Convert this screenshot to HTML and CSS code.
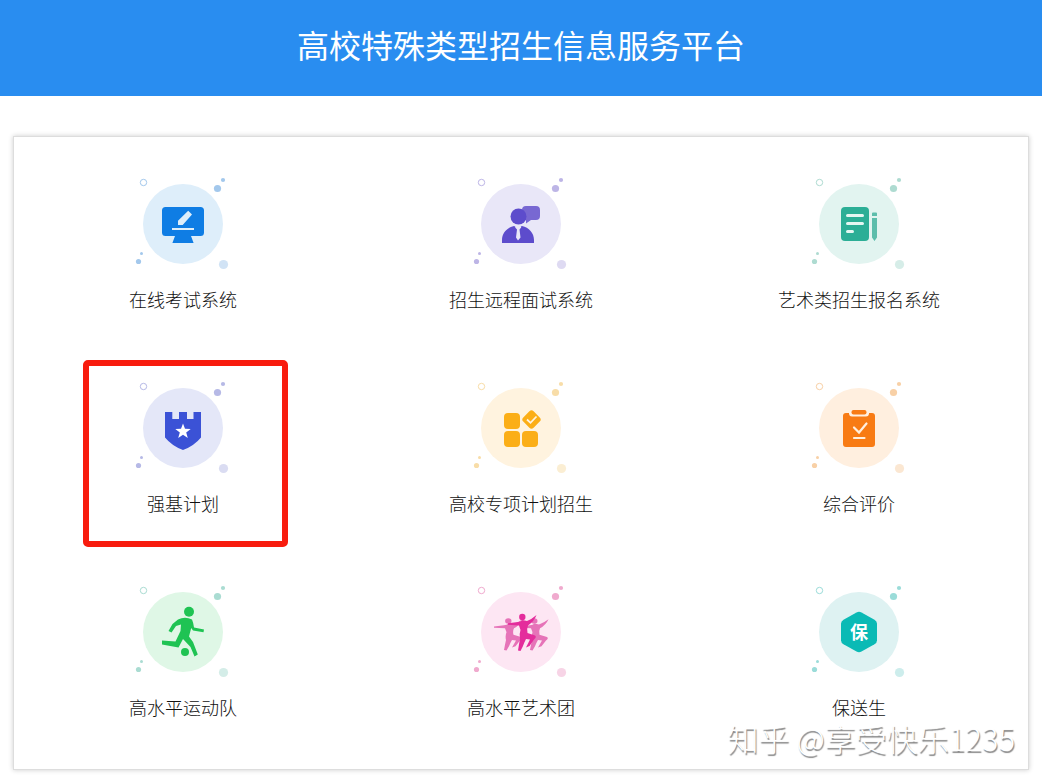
FILE: index.html
```html
<!doctype html>
<html lang="zh-CN">
<head>
<meta charset="utf-8">
<meta name="viewport" content="width=device-width, initial-scale=1">
<title>高校特殊类型招生信息服务平台</title>
<link rel="stylesheet" href="styles.css">
</head>

<body>
<!-- 公用：圆底和小点 -->
<svg class="defs" aria-hidden="true">
	<symbol id="dots" viewBox="0 0 110 105">
		<circle cx="55" cy="54" r="40" fill="var(--bg)"/>
		<circle cx="15.5" cy="12.5" r="3.2" fill="none" stroke="currentColor" stroke-width="1"/>
		<circle cx="89.5" cy="18.5" r="3.6" fill="currentColor"/>
		<circle cx="95" cy="10" r="2.1" fill="currentColor"/>
		<circle cx="13.5" cy="83.5" r="1.5" fill="currentColor"/>
		<circle cx="10.5" cy="91.5" r="2.6" fill="currentColor"/>
		<circle cx="95.5" cy="94.5" r="4.6" fill="currentColor" opacity=".5"/>
	</symbol>
	<symbol id="dancer" viewBox="0 0 110 105">
		<circle cx="56.3" cy="39" r="3.2"/>
		<path d="M42 45.300L52 44Q55 44 56.500 42L61 43Q66 41 70.500 37Q68 43.500 62 47.500Q60.500 51 61.500 55L69 57.500Q71 59 68 61.500L63.500 68L60 69.500L64 61.500L60 61Q58 65 57 68L54.500 73L52 72.500Q53 66 54 61Q53 56 54.500 52L53 47.500L42 46.800Z"/>
	</symbol>
</svg>

<header class="header">
	<h1>高校特殊类型招生信息服务平台</h1>
</header>

<main class="wrap">
	<ul class="list">
		<li>
			<a href="#" class="item blue">
				<svg class="icon" viewBox="0 0 110 105" aria-hidden="true">
					<use href="#dots"/>
					<path fill="#0f7de4" d="M37.500 37h35a3.500 3.500 0 0 1 3.500 3.500v22a3.500 3.500 0 0 1-3.500 3.500H63l2.600 7H44.400l2.600-7h-9.500a3.500 3.500 0 0 1-3.500-3.500v-22a3.500 3.500 0 0 1 3.500-3.500z"/>
					<path fill="#deeefa" d="M44 58h22v2H44zM60.200 40.800l3.800 3.800-9.300 10.400H50v-4.200z"/>
				</svg>
				<span>在线考试系统</span>
			</a>
		</li>
		<li>
			<a href="#" class="item purple">
				<svg class="icon" viewBox="0 0 110 105" aria-hidden="true">
					<use href="#dots"/>
					<path fill="#7868d2" d="M60 36h10a4 4 0 0 1 4 4v6a4 4 0 0 1-4 4h-5l-5 3.500V50h-4V40a4 4 0 0 1 4-4z"/>
					<circle cx="52.500" cy="46.500" r="8" fill="#5d4ccc"/>
					<path fill="#5d4ccc" d="M36 73v-3c0-7 5-12.500 12-14q4 2.500 8 0c7 1.500 12 7 12 14v3z"/>
					<path fill="#e9e7f8" d="M49.500 55.500h5l.7 2-1.700 2 1 8-2.500 3-2-3 1-8-1.800-2z"/>
				</svg>
				<span>招生远程面试系统</span>
			</a>
		</li>
		<li>
			<a href="#" class="item green">
				<svg class="icon" viewBox="0 0 110 105" aria-hidden="true">
					<use href="#dots"/>
					<rect x="37" y="37" width="28" height="34" rx="4" fill="#2cae96"/>
					<path fill="none" stroke="#e5f6f2" stroke-width="3" stroke-linecap="round" d="M43.500 45.500h15M43.500 53.500h15M43.500 61.500h5"/>
					<path fill="#5cbdab" d="M69 42.500h3a1 1 0 0 1 1 1V46h-5v-2.500a1 1 0 0 1 1-1zM68 48h5v19.500L70.500 71 68 67.500z"/>
				</svg>
				<span>艺术类招生报名系统</span>
			</a>
		</li>
		<li>
			<a href="#" class="item indigo current">
				<svg class="icon" viewBox="0 0 110 105" aria-hidden="true">
					<use href="#dots"/>
					<path fill="#3b52d6" d="M37 38h7.300v7H51v-7h8v7h6.500v-7H73v25.500Q66 72 55 76 44 72 37 63.500z"/>
					<path fill="#fff" d="M55 49.500l2 5.300 5.700.2-4.500 3.500 1.600 5.500-4.800-3.200-4.800 3.200 1.600-5.500-4.500-3.500 5.700-.2z"/>
				</svg>
				<span>强基计划</span>
			</a>
		</li>
		<li>
			<a href="#" class="item yellow">
				<svg class="icon" viewBox="0 0 110 105" aria-hidden="true">
					<use href="#dots"/>
					<g fill="#fbae17">
						<rect x="38" y="39" width="16" height="16" rx="4"/>
						<rect x="38" y="57" width="16" height="16" rx="4"/>
						<rect x="56" y="57" width="16" height="16" rx="4"/>
						<rect x="58.200" y="38.200" width="14.600" height="14.600" rx="3" transform="rotate(45 65.500 45.500)"/>
					</g>
					<path fill="none" stroke="#fff3df" stroke-width="1.800" d="M61 45.500l3.500 3.300 6-6.300"/>
				</svg>
				<span>高校专项计划招生</span>
			</a>
		</li>
		<li>
			<a href="#" class="item orange">
				<svg class="icon" viewBox="0 0 110 105" aria-hidden="true">
					<use href="#dots"/>
					<path fill="#f87b14" d="M42 39h3v1a3 3 0 0 0 3 2.500h14a3 3 0 0 0 3-2.500v-1h3a3 3 0 0 1 3 3v28a3 3 0 0 1-3 3H42a3 3 0 0 1-3-3V42a3 3 0 0 1 3-3z"/>
					<rect x="47.500" y="36" width="15" height="4.500" rx="2" fill="#f87b14"/>
					<path fill="none" stroke="#ffefdf" stroke-width="2.200" stroke-linecap="round" d="M50 53.500l5 5 7.500-9M50 64h10.500"/>
				</svg>
				<span>综合评价</span>
			</a>
		</li>
		<li>
			<a href="#" class="item grass">
				<svg class="icon" viewBox="0 0 110 105" aria-hidden="true">
					<use href="#dots"/>
					<g fill="#1fc353">
						<circle cx="61" cy="33.800" r="5"/>
						<circle cx="57" cy="74" r="4"/>
						<path d="M50 41.500Q57 38 64 41.500 65.500 45 66 49.500L76 51.500 75.500 54.200 65 52.500 63.200 50 61 58.500 65 64 69.800 76.500 66.500 78.500 62.500 69 55 61 50.500 69.500 34 66.500V62.500L47.500 63.500 52.500 53 53 46.500 48 48 43.500 54.500 40.500 53 44.500 46z"/>
					</g>
				</svg>
				<span>高水平运动队</span>
			</a>
		</li>
		<li>
			<a href="#" class="item pink">
				<svg class="icon" viewBox="0 0 110 105" aria-hidden="true">
					<use href="#dots"/>
					<g fill="#e673b8">
						<use href="#dancer" width="110" height="105" transform="translate(-14 9) scale(1 .87)"/>
						<use href="#dancer" width="110" height="105" transform="translate(12 9) scale(1 .87)"/>
					</g>
					<use href="#dancer" width="110" height="105" fill="#e42c9c"/>
				</svg>
				<span>高水平艺术团</span>
			</a>
		</li>
		<li>
			<a href="#" class="item cyan">
				<svg class="icon" viewBox="0 0 110 105" aria-hidden="true">
					<use href="#dots"/>
					<path fill="#0abab5" d="M52.500 34.500q2.500-1.300 5 0l13 7.200q2.500 1.500 2.500 4v16.600q0 2.500-2.500 4l-13 7.200q-2.500 1.300-5 0l-13-7.200q-2.500-1.500-2.500-4V45.700q0-2.500 2.500-4z"/>
					<text class="bao" x="55" y="61" text-anchor="middle">保</text>
				</svg>
				<span>保送生</span>
			</a>
		</li>
	</ul>
	<p class="mark">知乎 @享受快乐1235</p>
</main>
</body>
</html>
```
FILE: styles.css
```css
*{margin: 0;padding: 0;box-sizing: border-box;}
body{
	background: #fff;
	color: #111;
	font-family: "Noto Sans CJK SC", sans-serif;
	font-weight: 300;
}
.defs{
	position: absolute;
	width: 0;
	height: 0;
}
.header{
	padding: 20px 0 28px;
	background: #298df0;
	text-align: center;
}
.header h1{
	font-size: 32px;
	line-height: 48px;
	font-weight: 400;
	color: #fff;
}
.wrap{
	position: relative;
	margin: 40px 13px 13px;
	padding: 33px 0 50px;
	border: 1px solid #ddd;
	box-shadow: 0 0 5px rgba(0,0,0,.2);
}
.list{
	display: grid;
	grid-template-columns: repeat(3, 1fr);
	row-gap: 63px;
	list-style: none;
}
.item{
	position: relative;
	display: flex;
	flex-direction: column;
	align-items: center;
	gap: 12px;
	font-size: 18px;
	line-height: 24px;
	color: #111;
	text-decoration: none;
}
.icon{
	width: 110px;
	height: 105px;
}
.blue{--bg: #deeefa;}
.purple{--bg: #e9e7f8;}
.green{--bg: #e2f4f0;}
.indigo{--bg: #e4e7f8;}
.yellow{--bg: #fff3df;}
.orange{--bg: #ffefdf;}
.grass{--bg: #dff7e6;}
.pink{--bg: #fde6f3;}
.cyan{--bg: #def2f2;}
.blue .icon{color: #a3c8ec;}
.purple .icon{color: #bdb5e6;}
.green .icon{color: #aedbd1;}
.indigo .icon{color: #b6b9e6;}
.yellow .icon{color: #f8dda8;}
.orange .icon{color: #f8d0a6;}
.grass .icon{color: #aadcd2;}
.pink .icon{color: #f0aace;}
.cyan .icon{color: #9bdcd9;}
.bao{
	font-size: 18px;
	font-weight: 700;
	fill: #fff;
}
/* 红框 */
.current::after{
	content: "";
	position: absolute;
	left: calc(50% - 100px);
	top: -14px;
	width: 205px;
	height: 187px;
	border: 6px solid #f81c0e;
	border-radius: 5px;
	box-sizing: border-box;
}
.mark{
	position: absolute;
	right: 13px;
	bottom: 14px;
	font-size: 31px;
	line-height: 34px;
	color: #fff;
	text-shadow: 1px 2px 1px #888;
}
```
